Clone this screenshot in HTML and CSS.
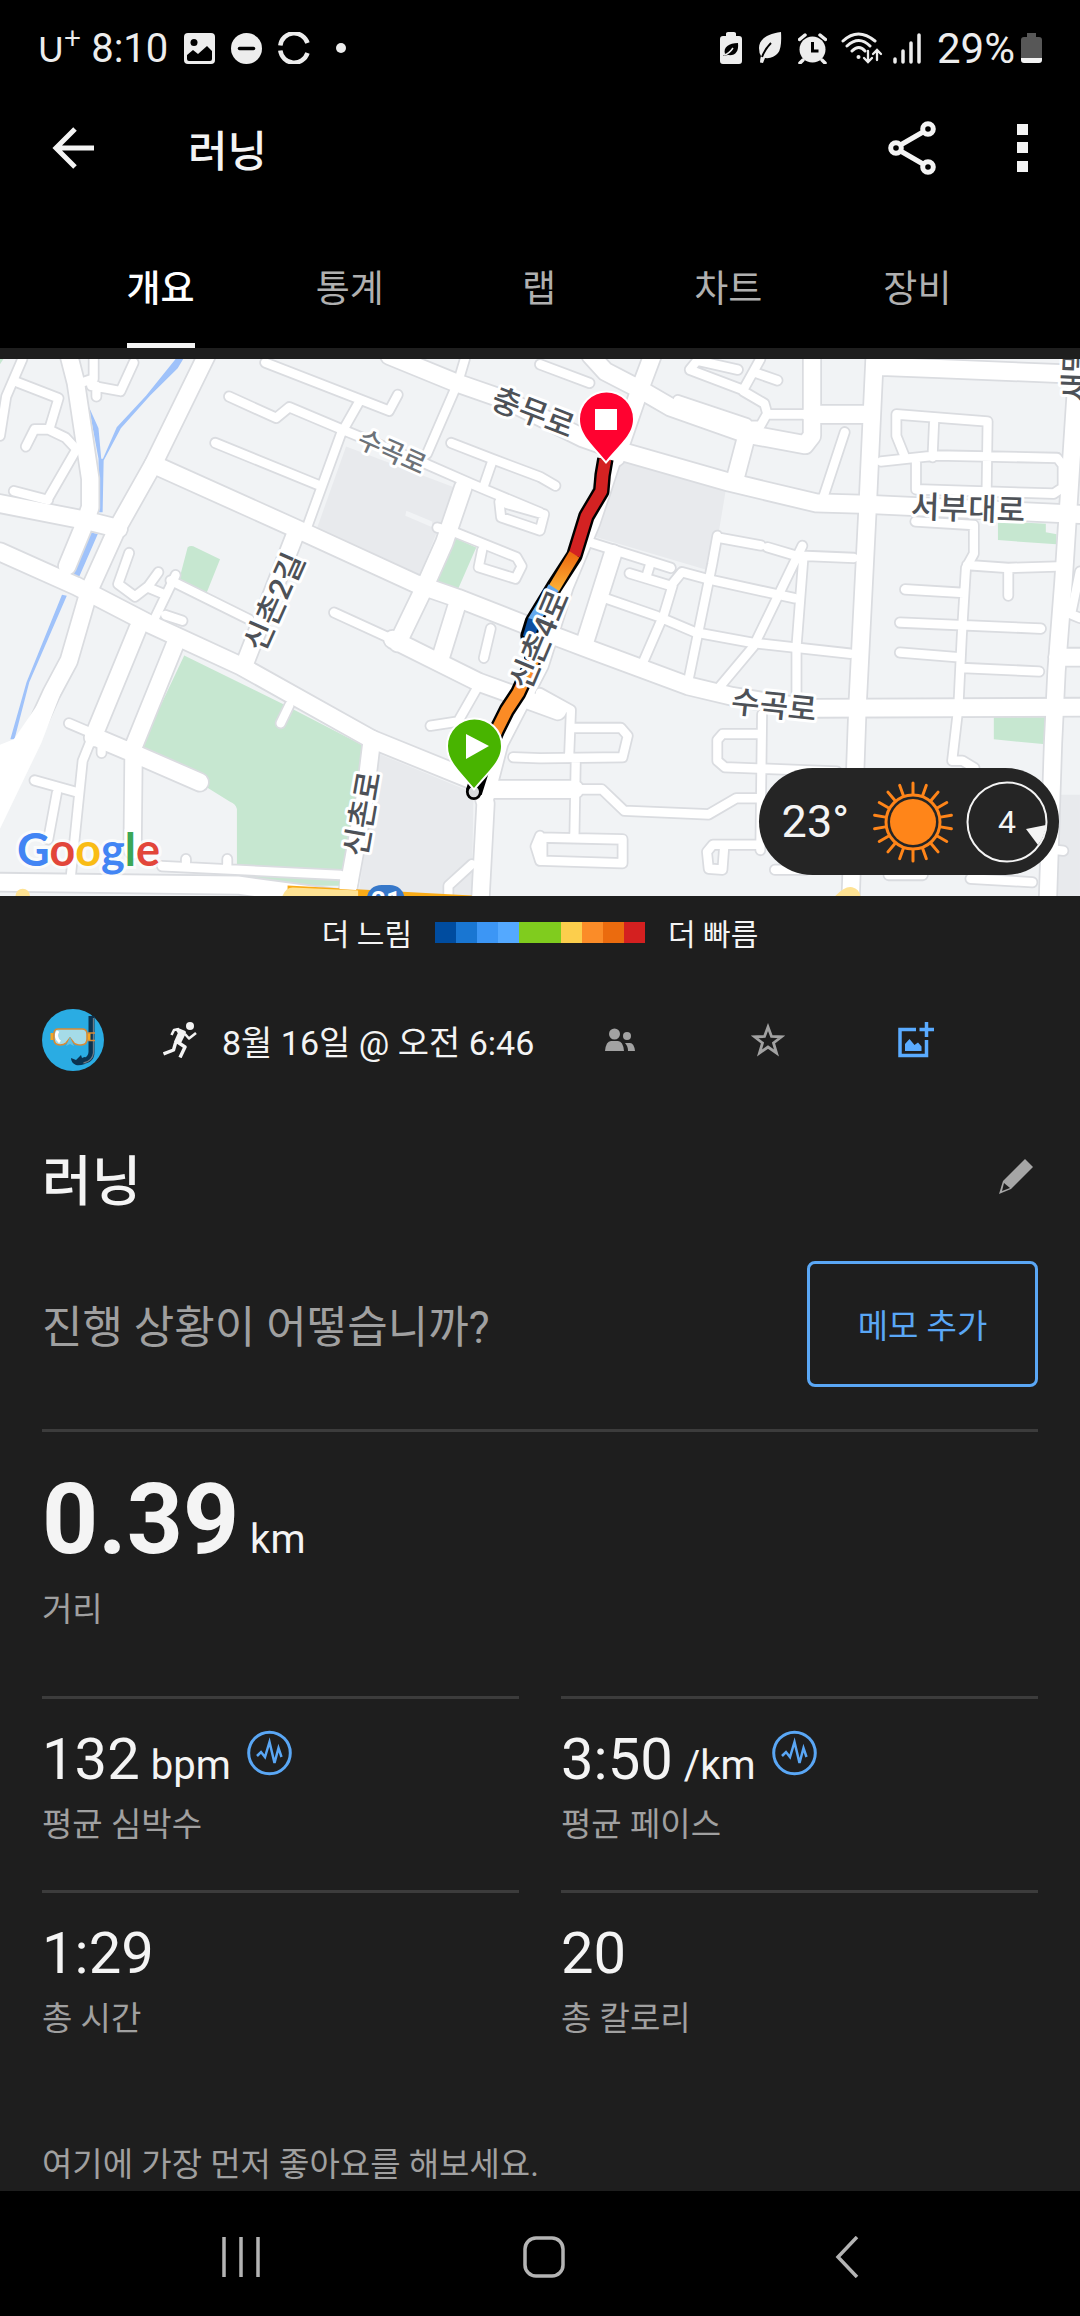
FILE: index.html
```html
<!DOCTYPE html>
<html lang="ko">
<head>
    <meta charset="UTF-8">
    <meta name="viewport" content="width=device-width, initial-scale=1.0">
    <title>러닝</title>
    <link rel="stylesheet" href="styles.css">
</head>
<body>
    <div class="status-bar">
        <div class="status-left">
            <span class="carrier">U<sup>+</sup></span>
            <span class="clock">8:10</span>
            <svg width="31" height="31" viewBox="0 0 31 31"><rect width="31" height="31" rx="4" fill="#ededed"/><circle cx="10" cy="9.500" r="3.500" fill="#000"/><path d="M3 22l6-5 5 4 9-8 5 5v8q0 2-2 2H5q-2 0-2-2z" fill="#000"/></svg>
            <svg width="31" height="31" viewBox="0 0 31 31"><circle cx="15.500" cy="15.500" r="15.500" fill="#ededed"/><path d="M8.500 15.500h14" stroke="#000" stroke-width="3.500" stroke-linecap="round"/></svg>
            <svg width="32" height="32" viewBox="0 0 32 32" fill="none" stroke="#ededed" stroke-width="4.500"><path d="M2.300 13.500A14 14 0 0 1 29.500 11M2.300 18.500A14 14 0 0 0 29.500 21"/></svg>
            <svg class="more-dot" width="10" height="10" viewBox="0 0 10 10"><circle cx="5" cy="5" r="5" fill="#ededed"/></svg>
        </div>
        <div class="status-right">
            <svg width="22" height="32" viewBox="0 0 22 32"><path d="M6 1.500Q6 0 8 0h6q2 0 2 1.500V4h3q3 0 3 3v22q0 3-3 3H3q-3 0-3-3V7q0-3 3-3h3z" fill="#ededed"/><path d="M3 24l2-2C3 15 9 11 18 11c1 9-3 13-10 12z" fill="#000"/><path d="M4 23q5-1 9-7" stroke="#ededed" stroke-width="1.500" fill="none"/></svg>
            <svg width="24" height="32" viewBox="0 0 24 32"><path d="M23 0C8 2 1 8 1 16q0 5 2 8-1 3-1 6.500l3 .5 2-5q8 1 13-5 4-5 3-21z" fill="#ededed"/><path d="M4 25q3-8 9-14" stroke="#000" stroke-width="2" fill="none"/></svg>
            <svg width="29" height="31" viewBox="0 0 29 31"><circle cx="14.500" cy="16.500" r="13" fill="#ededed"/><path d="M1.500 6.500L7 2M27.500 6.500L22 2M5 27l-3 3M24 27l3 3" stroke="#ededed" stroke-width="3.500" stroke-linecap="round"/><path d="M14.500 9v9h6" stroke="#000" stroke-width="3" fill="none"/></svg>
            <svg class="wifi" width="42" height="32" viewBox="0 0 42 32" fill="none" stroke="#ededed" stroke-width="3" stroke-linecap="round"><path d="M2 9Q17-5 34 9M6 14Q18 3 29 14M11 19Q18 12 24 19"/><circle cx="17.500" cy="25" r="2" fill="#ededed" stroke="none"/><path d="M27 19v10M23 26l4 4 4-4M36 28V19M32 22l4-4 4 4" stroke-width="2.300"/></svg>
            <svg width="28" height="31" viewBox="0 0 28 31" stroke="#ededed" stroke-width="3.500" stroke-linecap="round"><path d="M2 26v3M10 18v11M18 10v19M26 2v27"/></svg>
            <span class="battery-level">29%</span>
            <svg class="battery" width="21" height="30" viewBox="0 0 21 30"><path d="M6 0h9v4h3q3 0 3 3v18H0V7q0-3 3-3h3z" fill="#575757"/><path d="M0 25h21v2q0 3-3 3H3q-3 0-3-3z" fill="#f2f2f2"/></svg>
        </div>
    </div>

    <header class="app-bar">
        <button class="icon-btn back" type="button" aria-label="뒤로">
            <svg width="42" height="42" viewBox="0 0 42 42" fill="none" stroke="#f4f4f4" stroke-width="5"><path d="M23 2L4 21l19 19M4 21h38"/></svg>
        </button>
        <h1 class="app-title">러닝</h1>
        <button class="icon-btn share" type="button" aria-label="공유">
            <svg width="48" height="54" viewBox="0 0 48 54" fill="none" stroke="#f4f4f4" stroke-width="5"><circle cx="8" cy="27" r="5.300"/><circle cx="40" cy="8" r="5.300"/><circle cx="40" cy="46" r="5.300"/><path d="M12.500 24L35 11M12.500 30L35 43"/></svg>
        </button>
        <button class="icon-btn" type="button" aria-label="더보기">
            <svg width="11" height="48" viewBox="0 0 11 48" fill="#f4f4f4"><path d="M0 0h11v11H0zM0 18h11v11H0zM0 37h11v11H0z"/></svg>
        </button>
    </header>

    <nav class="tabs">
        <a class="tab active" href="#overview">개요</a>
        <a class="tab" href="#stats">통계</a>
        <a class="tab" href="#laps">랩</a>
        <a class="tab" href="#charts">차트</a>
        <a class="tab" href="#gear">장비</a>
    </nav>

    <main class="content" id="overview">
        <div class="map">
            <svg class="map-canvas" viewBox="0 0 1080 537" preserveAspectRatio="xMidYMid slice">
                <defs>
                    <g id="roads">
                        <!-- narrow streets -->
                        <g class="road narrow">
                            <path d="M50 90L170 135 145 215M75 270L100 222H140L190 245 222 278 140 415M40 395L140 420M0 240L18 130 65 25M225 95L272 80V25M265 100L350 115 388 35M280 100V130"/>
                            <path d="M375 568L343 655 392 690 430 662 460 622M430 665L480 685M510 630L450 750M495 645L725 755M480 742L530 758"/>
                            <path d="M665 130L802 190 840 160 1000 225 1240 320 1370 375 1568 455M1040 150L990 235 890 500M770 35L1130 170 1155 125M625 260L930 380"/>
                            <path d="M1350 25L1330 90 1240 290M1310 260L1430 305 1568 355 1613 380M1430 310L1405 380M1450 425L1455 468 1568 505 1580 460 1470 430"/>
                            <path d="M1270 497L1320 510 1500 580 1515 605 1497 640 1390 608 1400 560M970 735L1140 810M1425 780L1405 862M815 1045L840 995M1395 930L1330 1040 1250 1052"/>
                            <path d="M200 1045L280 1078M265 1090L240 1150 225 1290 205 1480M100 1205L230 1240M165 1240L140 1370M295 1100V1128M470 1445L990 1470M540 1425V1445M660 1425V1450M1370 1440L1302 1500V1529"/>
                            <path d="M1490 1140L1568 1143 1808 1140 1823 1080 1803 1058H1660M1568 960L1658 1008 1653 1130M1672 1145L1668 1360M1568 1365L1808 1370V1437L1575 1430V1370M1650 1230H1748L1813 1290 2058 1300 2138 1255H2210M1568 1360L1555 1390 1568 1430"/>
                            <path d="M1568 40L1712 92M2028 25L2003 55 2158 112 2208 25M2158 115L2220 150 2228 178 2208 212H2170M2028 30L2143 55M2190 62L2258 85M1968 140L2170 205M2235 180H2510M2453 230L2388 420"/>
                            <path d="M1718 540L1948 610M1888 600L1878 632M1828 625L1948 660 1980 622 2058 642 2308 695M1953 660L1928 740 1858 895M1758 695L1908 745 2018 790 2188 820 2470 850"/>
                            <path d="M2083 520L2068 600 1998 930M2083 525L2210 547M2228 552L2308 575 2480 582M2330 548L2188 830 2088 945M2333 580L2313 830V965"/>
                            <path d="M2628 300L2603 240V180L2868 200 2865 400M2713 190L2708 300M2558 312L2718 295 3070 302 3086 322V385L3060 402 2660 390 2660 310"/>
                            <path d="M2658 480L2828 490V570L2805 610 2793 800 2783 1000 2765 1150 2795 1150 2830 1170M2808 602L2928 610 3070 606M2928 610V688M2628 670L2800 680M2613 763L3023 780M2613 847L2783 860M2793 890L3018 900"/>
                            <path d="M2213 1020L2208 1400M2208 1075H2098L2083 1092V1150L2105 1168 2430 1180M2208 1385H2070L2053 1405 2058 1452 2098 1455 2103 1390M2250 1455H2340M2580 1470H2680M2818 1480L2998 1490M3068 1400L3088 1402M3136 620L3110 740 3136 750"/>
                        </g>
                        <!-- main streets -->
                        <g class="road wide">
                            <path d="M600 15L445 320 340 500 260 670 200 870 150 960 60 1150 0 1270M200 15L220 90 262 360V440L240 500 195 605M0 430L240 475 345 500"/>
                            <path d="M0 565L220 660 430 765 700 885 1080 1090 1400 1215M445 320L860 500 1210 655 1330 695 1568 785 1718 840 1998 940 2128 970 2268 992 2368 1003 3136 1000"/>
                            <path d="M860 510L710 880M1345 385L1290 540 1230 670 1155 820M1140 810L1390 930 1620 1010M1325 720L1280 860M400 780L270 1085M512 815L388 1110 385 1400M280 1085L390 1130 580 1210"/>
                            <path d="M1080 1090L1060 1250 1005 1540M1390 1200L1410 1270 1395 1540M1430 1230H1670M1410 1250L1450 1100 1568 880 1640 660 1718 480 1780 300"/>
                            <path d="M1130 15L1320 90 1470 140 1690 245 1808 285 2118 370 2370 428 2520 432 3136 460M1715 15L1758 60 1858 110 1948 160 2168 235 2338 265 2358 240V15M2353 180H2520M1895 15L1858 110 1790 300M2168 240L2138 350M1780 570L1698 820"/>
                            <path d="M2540 15L2520 430 2490 1000 2470 1540M2540 45L2728 52 3136 68M3128 60L3088 650 3068 900 3058 1100 3043 1540M3070 860H3136M0 1490L690 1498 1050 1545"/>
                        </g>
                    </g>
                    <linearGradient id="fade" x1="0" y1="0" x2="0" y2="1">
                        <stop offset="0" stop-color="#ed6b10"/>
                        <stop offset="1" stop-color="#fcae35"/>
                    </linearGradient>
                </defs>
                <rect width="1080" height="537" fill="#f1f3f5"/>
                <g transform="scale(.34436 .35714) translate(0 -25)">
                    <g fill="#e8eaed">
                        <path d="M1005 270L1320 385 1215 640 920 500zM1798 300L2108 390 2068 620 1718 520zM1100 1130L1375 1240 1370 1529H1040zM3078 1245h58v284h-68z"/>
                        <path d="M1180 450l75 30v16l-78-32z" fill="#f1f3f5"/>
                    </g>
                    <path d="M545 552q10-7 22 0l72 34-40 96-80-35zM1318 525l65 28-60 132-68-25zM535 855L820 990 1060 1110 990 1500H688V1285q-4-14-20-20L410 1110zM0 25h10L0 40zM2898 480l140 6 30 8v50l-170-12zM2886 1028h150v76l-150-14z" fill="#c6e7d0"/>
                    <path d="M3037 484h32v32l-32-6z" fill="#f1f3f5"/>
                    <g fill="#9fc2fa">
                        <path d="M510 25h22l-16 26-80 76-85 92-50 90-3 145h-10l-2-150-28-145 28 60 8 85h5l40-88 85-88zM262 510l22 5-55 122-18-5zM180 685l14 3L85 930 42 1090H30L77 930z"/>
                    </g>
                    <use href="#roads" class="casing"/>
                    <path d="M0 1105L40 1090 140 950 200 900 120 1100 0 1340z" fill="#fff"/>
                    <use href="#roads" class="surface"/>
                    <path d="M835 1499L1370 1527V1532H835z" fill="#f9ab17"/>
                    <path d="M820 1529q10-24 30-24l190 8v18H820z" fill="#fee293"/>
                    <path d="M988 1480h52l-6 32-48-3z" fill="#fff"/>
                    <circle cx="66" cy="1529" r="21" fill="#fee293"/>
                    <path d="M2425 1529q30-30 50-25 20 5 24 25z" fill="#fee293"/>
                    <rect x="1066" y="1498" width="108" height="70" rx="42" fill="#3778c9"/>
                    <!-- pace coloured track -->
                    <g fill="none" stroke-linejoin="round">
                        <path d="M1758 305L1750 350 1746 395 1703 465 1668 575 1608 665 1548 760 1535 800 1548 870 1505 960 1472 1008 1443 1064 1405 1150 1376 1238" stroke="#000" stroke-width="48"/>
                        <path d="M1758 305L1750 350 1746 395 1703 465 1668 575" stroke="#d32222" stroke-width="34"/>
                        <path d="M1668 572L1608 668" stroke="url(#fade)" stroke-width="34"/>
                        <path d="M1608 665L1548 760" stroke="#63a9ee" stroke-width="34"/>
                        <path d="M1550 755L1535 805" stroke="#0c4f9f" stroke-width="34"/>
                        <path d="M1538 805L1548 870 1505 960 1472 1008 1443 1064 1405 1150" stroke="#fb8b25" stroke-width="34"/>
                        <circle cx="1376" cy="1237" r="19" fill="#d8dadd" stroke="#000" stroke-width="8"/>
                    </g>
                </g>
                <g class="road-name">
                    <text transform="translate(533 54) rotate(21)">충무로</text>
                    <text class="minor" transform="translate(392 93) rotate(24)">수곡로</text>
                    <text transform="translate(275 243) rotate(-66)">신촌2길</text>
                    <text transform="translate(363 455) rotate(-80)">신촌로</text>
                    <text transform="translate(540 281) rotate(-67)">신촌4로</text>
                    <text transform="translate(968 150) rotate(2)">서부대로</text>
                    <text transform="translate(774 347) rotate(6)">수곡로</text>
                    <text transform="translate(1076 14) rotate(-88)">새말</text>
                </g>
                <text class="route-no" x="386" y="551">21</text>
                <g class="pin">
                    <path d="M474 429C458 410 448 402 448 387a26 26 0 0 1 53 0c0 15-11 23-27 42z" fill="#48b400"/>
                    <path d="M606 102C590 83 580 75 580 60a26 26 0 0 1 53 0c0 15-11 23-27 42z" fill="#ff0230"/>
                </g>
                <path d="M466 375l23 12-23 13zM595 50h22v21h-22z" fill="#fff"/>
                <text class="google" x="17" y="507"><tspan fill="#4285f4">G</tspan><tspan fill="#e2463a">o</tspan><tspan fill="#f9bc15">o</tspan><tspan fill="#4285f4">g</tspan><tspan fill="#3ba757">l</tspan><tspan fill="#e2463a">e</tspan></text>
            </svg>
            <div class="weather">
                <span class="temp">23°</span>
                <svg width="82" height="82" viewBox="-41 -41 82 82" fill="none" stroke="#ff8519">
                    <circle r="23" fill="#ff8519" stroke="none"/>
                    <circle r="27" stroke-width="3"/>
                    <path id="rays" d="M0-28V-39M0 28V39" stroke-width="3" stroke-linecap="round"/>
                    <use href="#rays" transform="rotate(20)"/>
                    <use href="#rays" transform="rotate(40)"/>
                    <use href="#rays" transform="rotate(60)"/>
                    <use href="#rays" transform="rotate(80)"/>
                    <use href="#rays" transform="rotate(100)"/>
                    <use href="#rays" transform="rotate(120)"/>
                    <use href="#rays" transform="rotate(140)"/>
                    <use href="#rays" transform="rotate(160)"/>
                </svg>
                <div class="wind">
                    <svg width="82" height="82" viewBox="-41 -41 82 82"><circle r="39.500" fill="none" stroke="#f4f4f4" stroke-width="2"/><path d="M19 7L39 3Q38 14 31 23z" fill="#f4f4f4"/></svg>
                    <span>4</span>
                </div>
            </div>
        </div>

        <div class="legend">
            <span>더 느림</span>
            <svg width="210" height="21" viewBox="0 0 10 1" preserveAspectRatio="none" shape-rendering="crispEdges">
                <rect width="1" height="1" fill="#004c9f"/>
                <rect x="1" width="1" height="1" fill="#1976d2"/>
                <rect x="2" width="1" height="1" fill="#3c96f5"/>
                <rect x="3" width="1" height="1" fill="#54a9ff"/>
                <rect x="4" width="2" height="1" fill="#80cc1e"/>
                <rect x="6" width="1" height="1" fill="#fcce4c"/>
                <rect x="7" width="1" height="1" fill="#fb8c28"/>
                <rect x="8" width="1" height="1" fill="#eb6b0e"/>
                <rect x="9" width="1" height="1" fill="#d42020"/>
            </svg>
            <span>더 빠름</span>
        </div>

        <div class="meta">
            <svg class="avatar" width="62" height="62" viewBox="0 0 62 62">
                <circle cx="31" cy="31" r="31" fill="#2aace3"/>
                <path d="M49.500 7v36q0 8-9 9" fill="none" stroke="#0b3350" stroke-width="6"/>
                <path d="M29 49l5 2 5-5 1 3 3-1v7q-6 2-9 1-5-2-5-7z" fill="#0b3350"/>
                <path d="M51.500 9v35q-1 8-10 10" fill="none" stroke="#6d7a84" stroke-width="1.300"/>
                <path d="M10 24v7M47 24v8" stroke="#f5a623" stroke-width="3"/>
                <path d="M46 24h7M46 31.500h7" stroke="#d98a35" stroke-width="1.300"/>
                <path d="M16 20H40q5 0 5 5v5q0 6-6 6-5 0-7-2l-4-5-4 5q-2 2-6 2-6 0-6-6v-5q0-5 4-5z" fill="#a5dbe8" stroke="#d98a35" stroke-width="1.600"/>
                <path d="M16 22q-4 6 2 11" fill="none" stroke="#fff" stroke-width="3"/>
                <path d="M28 28l-4 9 4-2 4 2z" fill="#5fc0e4"/>
            </svg>
            <svg class="runner" width="36" height="36" viewBox="0 0 36 36" fill="none" stroke="#f4f4f4" stroke-linejoin="round">
                <circle cx="27" cy="4" r="4" fill="#f4f4f4" stroke="none"/>
                <path d="M15 8l6 2.500-4.500 9-3.500.5 4-9z" fill="#f4f4f4" stroke-width="4"/>
                <path d="M16 7l-5 1-2.500 5M22 12l4 4.500L33 11" stroke-width="2.600"/>
                <path d="M12.500 21l-2 7-10 4M14.500 20l7.500 5-5 10.500" stroke-width="3.400"/>
            </svg>
            <time class="date">8월 16일 @ 오전 6:46</time>
            <div class="meta-actions">
                <button class="icon-btn" type="button" aria-label="공개 범위">
                    <svg width="30" height="24" viewBox="0 0 30 24" fill="#a2a2a2"><circle cx="9.500" cy="6" r="5.500"/><circle cx="22" cy="8" r="4"/><path d="M0 23q1-10 6-10h7q5 0 6 10zM20 15h5q4 0 5 8h-7q0-5-3-8z"/></svg>
                </button>
                <button class="icon-btn" type="button" aria-label="즐겨찾기">
                    <svg width="34" height="34" viewBox="0 0 34 34" fill="none" stroke="#a2a2a2" stroke-width="2.800"><path d="M17 4l3.500 9.500 10 .3-8 6.200 3 10-8.500-6-8.500 6 3-10-8-6.200 10-.3z"/></svg>
                </button>
                <button class="icon-btn" type="button" aria-label="사진 추가">
                    <svg width="36" height="36" viewBox="0 0 36 36" fill="none" stroke="#5aabff" stroke-width="3.500"><path d="M18 7.500H2v26h26.500V18M28.500 0v15M21.500 7.500H36"/><path d="M7 29v-7l4.500-5 5 6 3.500-2.500 3.500 4V29z" fill="#5aabff" stroke="none"/></svg>
                </button>
            </div>
        </div>

        <div class="title-row">
            <h2 class="activity-title">러닝</h2>
            <button class="icon-btn" type="button" aria-label="이름 수정">
                <svg width="40" height="48" viewBox="0 0 40 48"><path d="M27 0l8 8-22 22L1 35 5 22z" fill="#a6a6a6"/><path d="M6 24l6 5-8 3z" fill="#1e1e1e"/></svg>
            </button>
        </div>

        <div class="note-row">
            <p class="question">진행 상황이 어떻습니까?</p>
            <button class="note-btn" type="button">메모 추가</button>
        </div>

        <section class="distance">
            <div class="value big">0.39<span class="unit">km</span></div>
            <div class="label">거리</div>
        </section>

        <section class="stats">
            <div class="stat">
                <div class="value">132<span class="unit">bpm</span>
                    <svg class="pulse" width="45" height="46" viewBox="0 0 45 46" fill="none" stroke="#5aa7f5" stroke-width="3"><circle cx="22.500" cy="23" r="20.800"/><path d="M10 26l4-4 4 5 4.500-15 5 21 4-15 3 9" stroke-width="2.500"/></svg>
                </div>
                <div class="label">평균 심박수</div>
            </div>
            <div class="stat">
                <div class="value">3:50<span class="unit">/km</span>
                    <svg class="pulse" width="45" height="46" viewBox="0 0 45 46" fill="none" stroke="#5aa7f5" stroke-width="3"><circle cx="22.500" cy="23" r="20.800"/><path d="M10 26l4-4 4 5 4.500-15 5 21 4-15 3 9" stroke-width="2.500"/></svg>
                </div>
                <div class="label">평균 페이스</div>
            </div>
            <div class="stat">
                <div class="value">1:29</div>
                <div class="label">총 시간</div>
            </div>
            <div class="stat">
                <div class="value">20</div>
                <div class="label">총 칼로리</div>
            </div>
        </section>

        <p class="likes">여기에 가장 먼저 좋아요를 해보세요.</p>
    </main>

    <div class="system-nav">
        <button class="icon-btn" type="button" aria-label="최근 앱">
            <svg width="38" height="42" viewBox="0 0 38 42" stroke="#b4b4b4" stroke-width="3.500"><path d="M2 1v40M19 1v40M36 1v40"/></svg>
        </button>
        <button class="icon-btn" type="button" aria-label="홈">
            <svg width="42" height="42" viewBox="0 0 42 42" fill="none" stroke="#b4b4b4" stroke-width="3.500"><rect x="2" y="2" width="38" height="38" rx="11"/></svg>
        </button>
        <button class="icon-btn" type="button" aria-label="뒤로 가기">
            <svg width="24" height="42" viewBox="0 0 24 42" fill="none" stroke="#b4b4b4" stroke-width="3.500"><path d="M22 1L3 21l19 20"/></svg>
        </button>
    </div>
</body>
</html>
```

FILE: styles.css
```css
* {
    box-sizing: border-box;
}
body {
    margin: 0;
    min-height: 100vh;
    display: flex;
    flex-direction: column;
    background-color: #000;
    color: #f4f4f4;
    font-family: Roboto, "Noto Sans CJK KR", sans-serif;
}
h1, h2, p {
    margin: 0;
    font-weight: 500;
}
svg {
    display: block;
    flex: none;
}
.icon-btn {
    display: flex;
    align-items: center;
    justify-content: center;
    padding: 0;
    border: none;
    background: none;
    cursor: pointer;
}

/* status bar */
.status-bar {
    display: flex;
    justify-content: space-between;
    align-items: center;
    height: 96px;
    padding: 0 38px;
    color: #ededed;
    font-size: 40px;
}
.status-left, .status-right {
    display: flex;
    align-items: center;
    gap: 16px;
}
.carrier {
    font-family: Lato, sans-serif;
    font-size: 35px;
}
.carrier sup {
    font-size: 30px;
    line-height: 0;
}
.clock {
    margin: 0 0 0 -6px;
}
.more-dot {
    margin-left: 10px;
}
.wifi {
    margin: 0 -6px 0 -2px;
}
.battery-level {
    font-size: 42px;
}
.battery {
    margin-left: -10px;
}

/* app bar */
.app-bar {
    display: flex;
    align-items: center;
    height: 104px;
    padding: 0 52px;
}
.app-title {
    flex: 1;
    margin-left: 94px;
    font-size: 43px;
}
.share {
    margin-right: 81px;
}

/* tabs */
.tabs {
    display: grid;
    grid-template-columns: repeat(5, 1fr);
    justify-items: center;
    padding: 63px 68px 0 66px;
}
.tab {
    padding-bottom: 26px;
    border-bottom: 5px solid transparent;
    color: #b0b0b0;
    font-size: 37px;
    line-height: 54px;
    text-decoration: none;
}
.tab.active {
    border-bottom-color: #f4f4f4;
    color: #fff;
    font-weight: 500;
}

.content {
    flex: 1;
    padding-top: 11px;
    background-color: #1e1e1e;
}

/* map */
.map {
    position: relative;
}
.map-canvas {
    width: 100%;
    height: 537px;
}
.casing {
    --edge: 10px;
    stroke: #dadce0;
}
.surface {
    --edge: 0px;
    stroke: #fff;
}
.road {
    fill: none;
    stroke-linecap: round;
    stroke-linejoin: round;
}
.narrow {
    stroke-width: calc(24px + var(--edge));
}
.wide {
    stroke-width: calc(48px + var(--edge));
}
.road-name {
    fill: #4d5157;
    stroke: #fff;
    stroke-width: 6px;
    stroke-linejoin: round;
    paint-order: stroke;
    font-size: 31px;
    font-weight: 500;
    text-anchor: middle;
    dominant-baseline: central;
}
.minor {
    fill: #6d7278;
    font-size: 26px;
}
.route-no {
    fill: #fff;
    font-size: 26px;
    font-weight: 700;
    text-anchor: middle;
}
.pin {
    stroke: #fff;
    stroke-width: 4px;
    paint-order: stroke;
}
.google {
    stroke: #fff;
    stroke-width: 6px;
    stroke-opacity: .7;
    paint-order: stroke;
    font-family: Lato, sans-serif;
    font-size: 45px;
    font-weight: 700;
}
.weather {
    position: absolute;
    right: 21px;
    bottom: 21px;
    display: flex;
    align-items: center;
    height: 107px;
    padding: 0 11px 0 23px;
    border-radius: 54px;
    background-color: #252525;
}
.temp {
    margin-right: 23px;
    font-size: 45px;
}
.wind {
    display: grid;
    place-items: center;
    margin-left: 12px;
    font-size: 32px;
}
.wind svg, .wind span {
    grid-area: 1 / 1;
}

.legend {
    display: flex;
    align-items: center;
    justify-content: center;
    gap: 23px;
    height: 72px;
    font-size: 30px;
}

/* activity info */
.meta {
    display: flex;
    align-items: center;
    margin-top: 41px;
    padding: 0 90px 0 42px;
}
.runner {
    margin: 0 23px 0 59px;
}
.date {
    font-size: 34px;
}
.meta-actions {
    display: grid;
    grid-template-columns: repeat(3, 148px);
    margin-left: auto;
}
.title-row, .note-row {
    display: flex;
    align-items: center;
    justify-content: space-between;
    margin: 0 42px;
}
.title-row {
    margin-top: 72px;
}
.activity-title {
    font-size: 54px;
    line-height: 80px;
}
.note-row {
    margin-top: 38px;
}
.question {
    color: #a0a0a0;
    font-size: 44px;
    font-weight: 400;
}
.note-btn {
    width: 231px;
    height: 126px;
    border: 3px solid #5aa7f5;
    border-radius: 8px;
    background: none;
    color: #5aa7f5;
    font-family: inherit;
    font-size: 33px;
    cursor: pointer;
}

/* numbers */
.distance {
    margin: 42px 42px 0;
    padding: 30px 0 62px;
    border-top: 3px solid #3c3c3c;
}
.stats {
    display: grid;
    grid-template-columns: 1fr 1fr;
    column-gap: 42px;
    margin: 0 42px;
}
.stat {
    padding: 26px 0 41px;
    border-top: 3px solid #3c3c3c;
}
.value {
    display: flex;
    align-items: baseline;
    font-size: 58px;
    line-height: 68px;
}
.value.big {
    font-size: 98px;
    font-weight: 700;
    line-height: 116px;
}
.unit {
    margin-left: 11px;
    font-size: 40px;
    font-weight: 400;
    line-height: 40px;
}
.pulse {
    align-self: flex-start;
    margin: 5px 0 0 16px;
}
.label {
    margin-top: 8px;
    color: #a0a0a0;
    font-size: 33px;
    line-height: 48px;
}
.likes {
    margin: 57px 42px 2px;
    color: #a0a0a0;
    font-size: 33px;
    font-weight: 400;
    line-height: 48px;
}

/* system navigation */
.system-nav {
    display: grid;
    grid-template-columns: repeat(3, 1fr);
    height: 126px;
    padding: 6px 82px 0 89px;
}
```
